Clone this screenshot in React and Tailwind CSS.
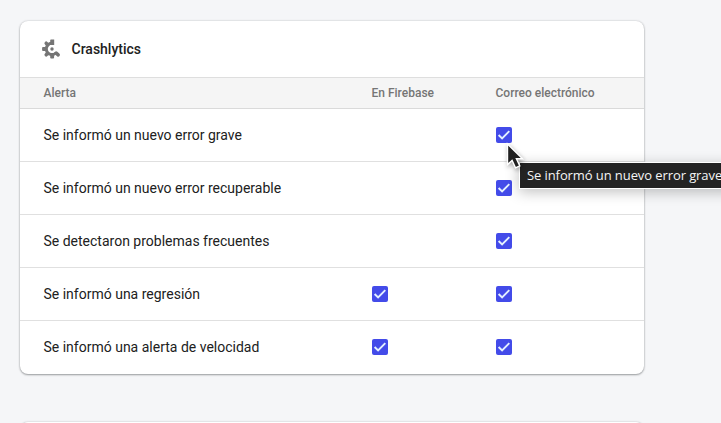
const rows = [
  { label: 'Se informó un nuevo error grave', firebase: false },
  { label: 'Se informó un nuevo error recuperable', firebase: false },
  { label: 'Se detectaron problemas frecuentes', firebase: false },
  { label: 'Se informó una regresión', firebase: true },
  { label: 'Se informó una alerta de velocidad', firebase: true },
];

function CrashlyticsIcon() {
  return (
    <svg width="20" height="20" viewBox="0 0 20 20" fill="none" stroke="#757575">
      <path d="M12 4.5A5.6 5.6 0 1 0 14.8 14" strokeWidth="3" />
      <path d="M9.2 1.2q0-.8.8-.8h3.2v5.6H9.2zM9.2 15h3.9v3.6q0 .9-.9.9h-2.1q-.9 0-.9-.9zM6 8.1H2q-.9 0-.9.9v2q0 .9.9.9h4z" fill="#757575" stroke="none" />
      <path d="M5.2 4.2l1.2 1.2M5.2 15.8l1.2-1.2M15.2 14.2l2 1.7" strokeWidth="3.5" strokeLinecap="round" />
      <circle cx="11" cy="10" r="1.7" fill="#757575" stroke="none" />
    </svg>
  );
}

function Checkbox() {
  return (
    <span role="checkbox" aria-checked="true" className="block size-4 rounded-[2px] bg-[#434be9]">
      <svg width="16" height="16" viewBox="0 0 16 16" fill="none" stroke="#e3f0ff" strokeWidth="1.9">
        <path d="M2.6 8l3.5 3.5 7.2-7.4" />
      </svg>
    </span>
  );
}

function Cursor() {
  return (
    <svg className="absolute left-[503px] top-[139px] drop-shadow-[1px_2px_2px_rgba(0,0,0,0.35)]" width="24" height="34" viewBox="0 0 24 34">
      <path d="M4.5 5v20.6l4.6-4.1 3.4 7.3 4.3-1.8-3.4-7.3h6.1z" fill="#202020" stroke="#fff" strokeWidth="1.4" />
    </svg>
  );
}

export default function App() {
  return (
    <div className="relative h-[423px] w-full overflow-hidden bg-[#f5f6f8] pl-5 pt-[21px] font-['Roboto',sans-serif] text-[#212121]">
      <section className="h-[353px] w-[624px] overflow-hidden rounded-lg bg-white shadow-[0_1px_2px_rgba(60,64,67,0.45),0_0_2px_rgba(60,64,67,0.25)]">
        <header className="flex h-[57px] items-center border-b border-[#dedede] pl-[21px]">
          <CrashlyticsIcon />
          <h2 className="ml-[10.5px] text-sm font-medium">Crashlytics</h2>
        </header>
        <div className="grid h-[31px] grid-cols-[328px_124px_1fr] items-center border-b border-[#dadada] bg-[#f5f5f5] pl-[23.5px] text-xs font-medium text-[#757575]">
          <span>Alerta</span>
          <span>En Firebase</span>
          <span>Correo electrónico</span>
        </div>
        {rows.map((row) => (
          <div key={row.label} className="grid h-[53px] grid-cols-[328.5px_124px_1fr] items-center border-b border-[#e0e0e0] pl-[23.5px] text-sm last:border-transparent">
            <span>{row.label}</span>
            <span>{row.firebase && <Checkbox />}</span>
            <Checkbox />
          </div>
        ))}
      </section>
      <section className="mt-12 h-20 w-[624px] rounded-lg bg-white shadow-[0_1px_2px_rgba(60,64,67,0.4),0_0_2px_rgba(60,64,67,0.25)]" />
      <div role="tooltip" className="absolute left-[519px] top-[162px] flex h-[27px] w-[230px] items-center whitespace-nowrap border border-white bg-[#232323] pl-[7px] font-['Open_Sans',sans-serif] text-[13px] tracking-[-0.09px] text-[#f5f5f5] shadow-[0_3px_14px_rgba(0,0,0,0.25)]">
        Se informó un nuevo error grave
      </div>
      <Cursor />
    </div>
  );
}
